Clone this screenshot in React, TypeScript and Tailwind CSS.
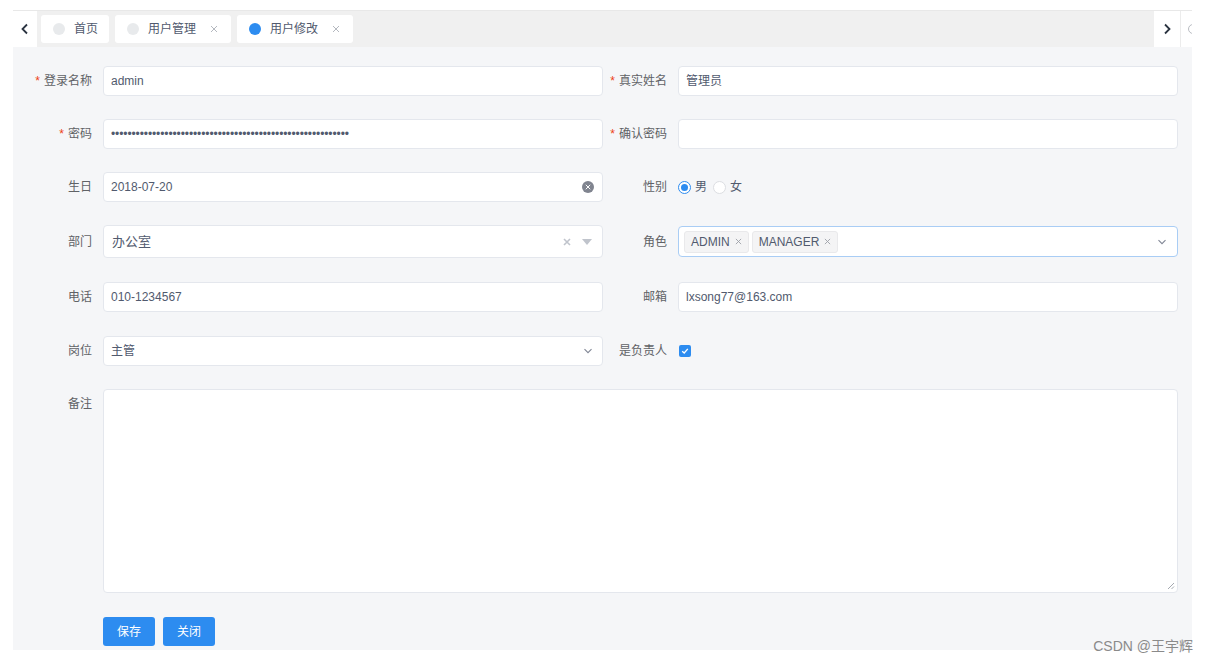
import React from "react";

const font = { fontFamily: '"Liberation Sans", "Noto Sans CJK SC", sans-serif' };

function Label({ text, req, top }: { text: string; req?: boolean; top?: boolean }) {
  return (
    <div className={`flex justify-end pr-[11px] text-[12px] text-[#606266] leading-[30px] ${top ? "items-start" : "items-center"}`}>
      {req && <span className="text-[#ed4014] mr-[4px] text-[12px]">*</span>}
      <span>{text}</span>
    </div>
  );
}

function Input({ value, h = 30, extra, cls = "" }: { value?: string; h?: number; extra?: React.ReactNode; cls?: string }) {
  return (
    <div
      className={`flex items-center bg-white border border-[#e4e7ed] rounded-[4px] pl-[7px] pr-[9px] text-[12px] text-[#515a6e] ${cls}`}
      style={{ height: h }}
    >
      <span className="flex-1 truncate">{value}</span>
      {extra}
    </div>
  );
}

function Chevron() {
  return (
    <svg width="10" height="10" viewBox="0 0 10 10" className="text-[#808695]">
      <path d="M1.5 3.2 L5 6.7 L8.5 3.2" fill="none" stroke="currentColor" strokeWidth="1.1" />
    </svg>
  );
}

function XIcon({ size = 8, color = "#a0a4ab", sw = 1.1 }: { size?: number; color?: string; sw?: number }) {
  return (
    <svg width={size} height={size} viewBox="0 0 8 8">
      <path d="M1 1 L7 7 M7 1 L1 7" stroke={color} strokeWidth={sw} />
    </svg>
  );
}

function Tab({ title, active, closable, w }: { title: string; active?: boolean; closable?: boolean; w: number }) {
  return (
    <div className="h-[28px] bg-white rounded-[3px] flex items-center pl-[12px] text-[12px] text-[#515a6e]" style={{ width: w }}>
      <span className={`w-[12px] h-[12px] rounded-full ${active ? "bg-[#2d8cf0]" : "bg-[#e8eaec]"}`} />
      <span className="ml-[9px]">{title}</span>
      {closable && (
        <span className="ml-auto mr-[13px] flex">
          <XIcon size={8} color="#b4b8bf" sw={1} />
        </span>
      )}
    </div>
  );
}

export default function App() {
  return (
    <div className="w-[1209px] h-[661px] bg-white relative" style={font}>
      <div className="absolute left-[13px] top-[10px] w-[1179px] h-[640px] bg-[#f5f6f8] flex flex-col">
        {/* tab bar */}
        <div className="h-[37px] flex bg-[#f0f0f0] border-t border-[#e8e8e8]">
          <div className="w-[24px] bg-white flex items-center justify-center">
            <svg width="10" height="12" viewBox="0 0 10 12">
              <path d="M7 1.5 L2.5 6 L7 10.5" fill="none" stroke="#2b3441" strokeWidth="1.8" />
            </svg>
          </div>
          <div className="flex-1 flex items-center gap-[6px] pl-[4px]">
            <Tab title="首页" w={68} />
            <Tab title="用户管理" closable w={116} />
            <Tab title="用户修改" active closable w={116} />
          </div>
          <div className="w-[27px] bg-white flex items-center justify-center border-r border-[#ececec]">
            <svg width="10" height="12" viewBox="0 0 10 12">
              <path d="M3 1.5 L7.5 6 L3 10.5" fill="none" stroke="#2b3441" strokeWidth="1.8" />
            </svg>
          </div>
          <div className="w-[11px] bg-white overflow-hidden flex items-center">
            <span className="ml-[7px] w-[10px] h-[10px] rounded-full border border-[#b9bcc2] shrink-0" />
          </div>
        </div>

        {/* form */}
        <div className="grid grid-cols-[90px_500px_75px_500px] mt-[19px]">
          <Label text="登录名称" req />
          <Input value="admin" />
          <Label text="真实姓名" req />
          <Input value="管理员" />
        </div>
        <div className="grid grid-cols-[90px_500px_75px_500px] mt-[23px]">
          <Label text="密码" req />
          <Input value={"•".repeat(58)} cls="tracking-[-0.1px] text-[9px]" />
          <Label text="确认密码" req />
          <Input value="" />
        </div>
        <div className="grid grid-cols-[90px_500px_75px_500px] mt-[23px]">
          <Label text="生日" />
          <Input
            value="2018-07-20"
            extra={
              <span className="w-[12px] h-[12px] rounded-full bg-[#80848f] flex items-center justify-center -mr-[1px]">
                <XIcon size={6} color="#ffffff" sw={1.3} />
              </span>
            }
          />
          <Label text="性别" />
          <div className="flex items-center text-[12px] text-[#515a6e]">
            <span className="w-[13px] h-[13px] rounded-full border border-[#2d8cf0] bg-white flex items-center justify-center">
              <span className="w-[7px] h-[7px] rounded-full bg-[#2d8cf0]" />
            </span>
            <span className="ml-[4px]">男</span>
            <span className="ml-[6px] w-[13px] h-[13px] rounded-full border border-[#dcdee2] bg-white" />
            <span className="ml-[4px]">女</span>
          </div>
        </div>
        <div className="grid grid-cols-[90px_500px_75px_500px] mt-[23px] items-center">
          <Label text="部门" />
          <Input
            value="办公室"
            h={33}
            cls="pl-[8px] text-[13px] text-[#333]"
            extra={
              <span className="flex items-center gap-[11px] mr-[1px]">
                <XIcon size={8} color="#c0c4cc" sw={1.6} />
                <svg width="10" height="6" viewBox="0 0 10 6">
                  <path d="M0 0 L10 0 L5 6 Z" fill="#c0c4cc" />
                </svg>
              </span>
            }
          />
          <Label text="角色" />
          <div className="h-[31px] bg-white border border-[#a9cdf5] rounded-[4px] flex items-center pl-[5px] pr-[10px] text-[12px] text-[#515a6e] gap-[3px]">
            <span className="h-[22px] pl-[6px] pr-[6px] bg-[#f4f4f5] border border-[#e9e9eb] rounded-[3px] flex items-center gap-[5px]">
              ADMIN <XIcon size={7} color="#9a9ea6" sw={1} />
            </span>
            <span className="h-[22px] pl-[6px] pr-[6px] bg-[#f4f4f5] border border-[#e9e9eb] rounded-[3px] flex items-center gap-[5px]">
              MANAGER <XIcon size={7} color="#9a9ea6" sw={1} />
            </span>
            <span className="ml-auto flex">
              <Chevron />
            </span>
          </div>
        </div>
        <div className="grid grid-cols-[90px_500px_75px_500px] mt-[24px]">
          <Label text="电话" />
          <Input value="010-1234567" />
          <Label text="邮箱" />
          <Input value="lxsong77@163.com" />
        </div>
        <div className="grid grid-cols-[90px_500px_75px_500px] mt-[24px]">
          <Label text="岗位" />
          <Input value="主管" extra={<Chevron />} />
          <Label text="是负责人" />
          <div className="flex items-center">
            <span className="w-[12px] h-[12px] rounded-[2px] bg-[#2d8cf0] flex items-center justify-center ml-[1px]">
              <svg width="8" height="8" viewBox="0 0 8 8">
                <path d="M1.2 4.2 L3.2 6 L6.8 1.8" fill="none" stroke="#ffffff" strokeWidth="1.3" />
              </svg>
            </span>
          </div>
        </div>
        <div className="grid grid-cols-[90px_1075px] mt-[23px]">
          <Label text="备注" top />
          <div className="h-[204px] bg-white border border-[#e4e7ed] rounded-[4px] relative">
            <svg width="8" height="8" viewBox="0 0 8 8" className="absolute right-[2px] bottom-[2px]">
              <path d="M7 1 L1 7 M7 4.5 L4.5 7" stroke="#9a9ea6" strokeWidth="0.9" />
            </svg>
          </div>
        </div>
        <div className="flex gap-[8px] pl-[90px] mt-[24px]">
          <button className="w-[52px] h-[29px] bg-[#2d8cf0] text-white text-[12px] rounded-[3px]">保存</button>
          <button className="w-[52px] h-[29px] bg-[#2d8cf0] text-white text-[12px] rounded-[3px]">关闭</button>
        </div>
      </div>
      <div className="absolute right-[16px] top-[636px] text-[14px] text-[#8a8a8a] bg-transparent">CSDN @王宇辉</div>
    </div>
  );
}
